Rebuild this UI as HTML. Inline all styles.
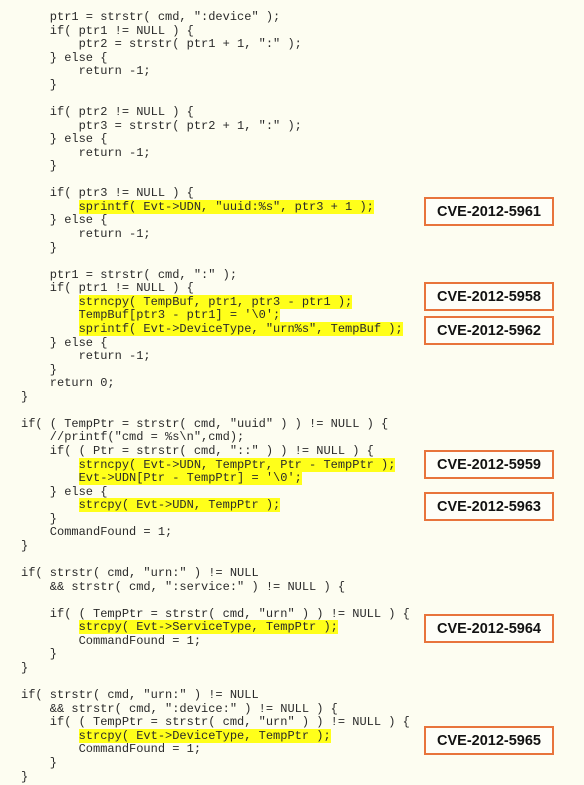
<!DOCTYPE html>
<html><head><meta charset="utf-8"><style>
html,body{margin:0;padding:0;background:#fdfdf1;width:584px;height:785px;overflow:hidden}
pre{position:absolute;left:21px;top:11px;margin:0;font-family:"Liberation Mono",monospace;font-size:12px;line-height:13.57px;color:#2a2a2a}
.h{background:#ffff1a}
.b{position:absolute;left:424px;width:126px;height:25px;border:2px solid #e8743c;background:#fefef8;font-family:"Liberation Sans",sans-serif;font-weight:bold;font-size:14.5px;line-height:26px;text-align:center;color:#111}
</style></head><body>
<pre>    ptr1 = strstr( cmd, ":device" );
    if( ptr1 != NULL ) {
        ptr2 = strstr( ptr1 + 1, ":" );
    } else {
        return -1;
    }

    if( ptr2 != NULL ) {
        ptr3 = strstr( ptr2 + 1, ":" );
    } else {
        return -1;
    }

    if( ptr3 != NULL ) {
        <span class="h">sprintf( Evt->UDN, "uuid:%s", ptr3 + 1 );</span>
    } else {
        return -1;
    }

    ptr1 = strstr( cmd, ":" );
    if( ptr1 != NULL ) {
        <span class="h">strncpy( TempBuf, ptr1, ptr3 - ptr1 );</span>
        <span class="h">TempBuf[ptr3 - ptr1] = '\0';</span>
        <span class="h">sprintf( Evt->DeviceType, "urn%s", TempBuf );</span>
    } else {
        return -1;
    }
    return 0;
}

if( ( TempPtr = strstr( cmd, "uuid" ) ) != NULL ) {
    //printf("cmd = %s\n",cmd);
    if( ( Ptr = strstr( cmd, "::" ) ) != NULL ) {
        <span class="h">strncpy( Evt->UDN, TempPtr, Ptr - TempPtr );</span>
        <span class="h">Evt->UDN[Ptr - TempPtr] = '\0';</span>
    } else {
        <span class="h">strcpy( Evt->UDN, TempPtr );</span>
    }
    CommandFound = 1;
}

if( strstr( cmd, "urn:" ) != NULL
    &amp;&amp; strstr( cmd, ":service:" ) != NULL ) {

    if( ( TempPtr = strstr( cmd, "urn" ) ) != NULL ) {
        <span class="h">strcpy( Evt->ServiceType, TempPtr );</span>
        CommandFound = 1;
    }
}

if( strstr( cmd, "urn:" ) != NULL
    &amp;&amp; strstr( cmd, ":device:" ) != NULL ) {
    if( ( TempPtr = strstr( cmd, "urn" ) ) != NULL ) {
        <span class="h">strcpy( Evt->DeviceType, TempPtr );</span>
        CommandFound = 1;
    }
}</pre>
<div class="b" style="top:197px">CVE-2012-5961</div>
<div class="b" style="top:282px">CVE-2012-5958</div>
<div class="b" style="top:316px">CVE-2012-5962</div>
<div class="b" style="top:450px">CVE-2012-5959</div>
<div class="b" style="top:492px">CVE-2012-5963</div>
<div class="b" style="top:614px">CVE-2012-5964</div>
<div class="b" style="top:726px">CVE-2012-5965</div>
</body></html>
